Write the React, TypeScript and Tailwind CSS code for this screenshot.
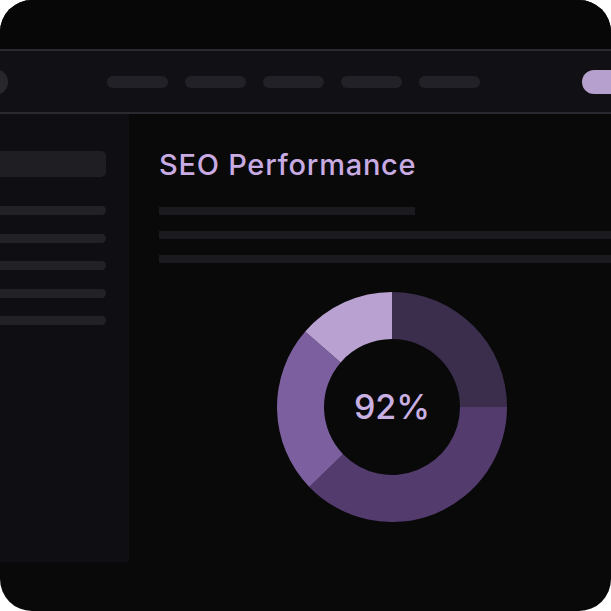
import React from 'react';

// Donut segments: start/end angle in degrees, clockwise from 12 o'clock
const segments = [
    { from: 0, to: 90, color: '#3b2e4d' },
    { from: 90, to: 226, color: '#533b6e' },
    { from: 226, to: 311, color: '#7c5f9e' },
    { from: 311, to: 360, color: '#b9a1d1' },
];

function point(cx: number, cy: number, r: number, deg: number) {
    const a = ((deg - 90) * Math.PI) / 180;
    return [cx + r * Math.cos(a), cy + r * Math.sin(a)];
}

function arcPath(from: number, to: number, rOut: number, rIn: number, c: number) {
    const [x1, y1] = point(c, c, rOut, from);
    const [x2, y2] = point(c, c, rOut, to);
    const [x3, y3] = point(c, c, rIn, to);
    const [x4, y4] = point(c, c, rIn, from);
    const large = to - from > 180 ? 1 : 0;
    return `M${x1} ${y1} A${rOut} ${rOut} 0 ${large} 1 ${x2} ${y2} L${x3} ${y3} A${rIn} ${rIn} 0 ${large} 0 ${x4} ${y4} Z`;
}

function Donut({ value }: { value: number }) {
    return (
        <div className="relative w-[230px] h-[230px]">
            <svg width="230" height="230" viewBox="0 0 230 230">
                {segments.map((s) => (
                    <path key={s.from} d={arcPath(s.from, s.to, 115, 68, 115)} fill={s.color} />
                ))}
            </svg>
            <div className="absolute inset-0 flex items-center justify-center">
                <span className="text-[34px] leading-none font-medium text-[#c9b0e3]">{value}%</span>
            </div>
        </div>
    );
}

export default function App() {
    const navItems = [0, 1, 2, 3, 4];
    const sideLines = [0, 1, 2, 3, 4];

    return (
        <div className="w-[611px] h-[611px] bg-white" style={{ fontFamily: 'Inter, "Liberation Sans", sans-serif' }}>
            <div className="w-full h-full rounded-[32px] bg-[#09090a] overflow-hidden flex flex-col">
                {/* Top strip */}
                <div className="h-[49px] shrink-0 bg-[#070708]" />

                {/* Header */}
                <div className="h-[65px] shrink-0 flex items-center bg-[#111115] border-y-2 border-[#2a292f]">
                    <div className="w-[30px] h-[26px] -ml-[22px] rounded-full bg-[#28272c]" />
                    <div className="flex gap-[17px] ml-[99px]">
                        {navItems.map((i) => (
                            <div key={i} className="w-[61px] h-[12px] rounded-full bg-[#222127]" />
                        ))}
                    </div>
                    <div className="ml-auto -mr-[30px] w-[59px] h-[24px] rounded-full bg-[#b6a0cd]" />
                </div>

                {/* Body */}
                <div className="flex flex-1">
                    {/* Sidebar */}
                    <div className="w-[129px] h-[448px] shrink-0 bg-[#0f0e13] pt-[37px] pr-[23px]">
                        <div className="h-[26px] -ml-[8px] rounded-[5px] bg-[#1f1e23]" />
                        <div className="flex flex-col gap-[18.5px] mt-[29px]">
                            {sideLines.map((i) => (
                                <div key={i} className="h-[9px] -ml-[8px] rounded-full bg-[#222126]" />
                            ))}
                        </div>
                    </div>

                    {/* Main */}
                    <div className="flex-1 pl-[30px] pt-[34px]">
                        <h1 className="text-[29px] leading-[34px] font-medium tracking-[0.75px] text-[#c8abe2]">SEO Performance</h1>
                        <div className="mt-[25px] w-[256px] h-[8px] bg-[#1b1a1f]" />
                        <div className="mt-[16px] h-[8px] bg-[#1b1a1f]" />
                        <div className="mt-[16px] h-[8px] bg-[#1b1a1f]" />
                        <div className="mt-[29px] ml-[118px]">
                            <Donut value={92} />
                        </div>
                    </div>
                </div>
            </div>
        </div>
    );
}
